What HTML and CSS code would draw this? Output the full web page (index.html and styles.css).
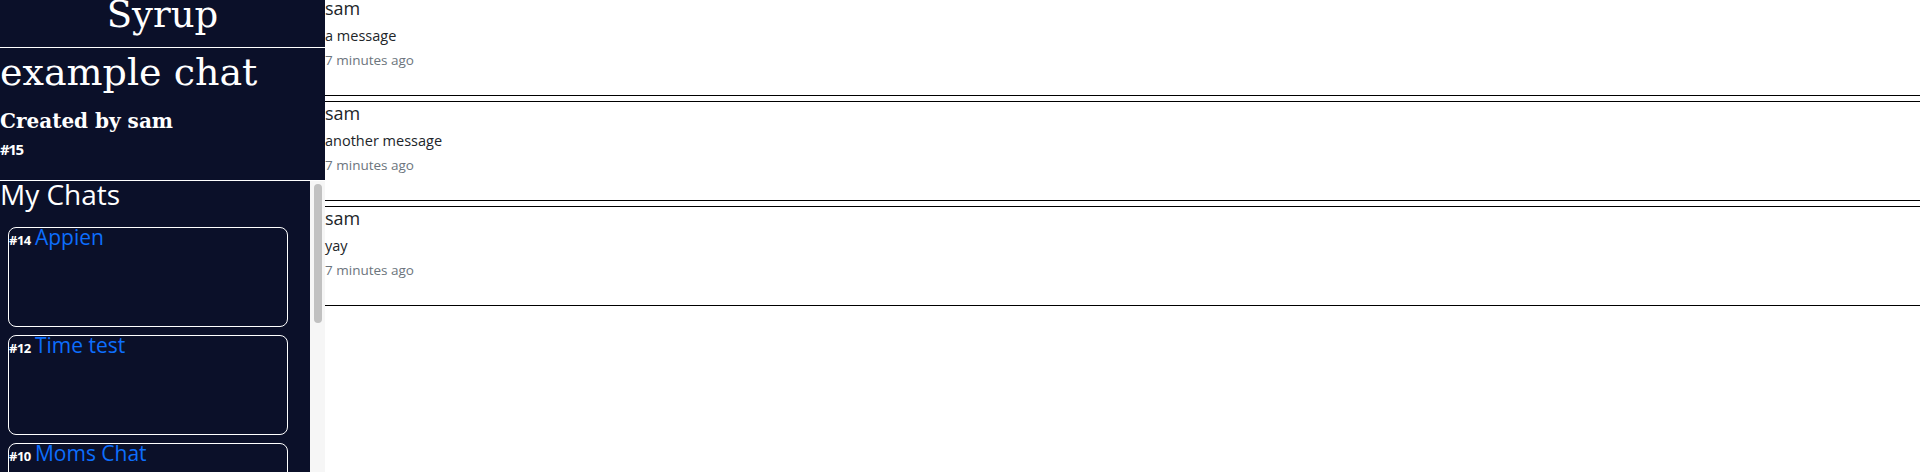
FILE: index.html
```html
<!DOCTYPE html>
<html lang="en">
<head>
<meta charset="utf-8">
<title>Syrup - example chat</title>
<link rel="stylesheet" href="styles.css">
</head>
<body>
<div class="app">
  <aside class="sidebar">
    <header class="brand">Syrup</header>
    <section class="chat-info">
      <h1 class="chat-title">example chat</h1>
      <h3 class="chat-owner">Created by sam</h3>
      <small class="chat-id">#15</small>
    </section>
    <div class="chat-pane">
      <nav class="chat-list">
        <h2 class="list-title">My Chats</h2>
        <div class="chat-card"><span class="card-id">#14</span> <a class="card-name" href="#">Appien</a></div>
        <div class="chat-card"><span class="card-id">#12</span> <a class="card-name" href="#">Time test</a></div>
        <div class="chat-card"><span class="card-id">#10</span> <a class="card-name" href="#">Moms Chat</a></div>
        <div class="chat-card"><span class="card-id">#8</span> <a class="card-name" href="#">test</a></div>
        <div class="chat-card"><span class="card-id">#5</span> <a class="card-name" href="#">hello</a></div>
      </nav>
      <div class="scrollbar"><div class="scroll-thumb"></div></div>
    </div>
  </aside>
  <main class="messages">
    <article class="msg">
      <div class="msg-author">sam</div>
      <div class="msg-body">a message</div>
      <div class="msg-time">7 minutes ago</div>
    </article>
    <article class="msg">
      <div class="msg-author">sam</div>
      <div class="msg-body">another message</div>
      <div class="msg-time">7 minutes ago</div>
    </article>
    <article class="msg">
      <div class="msg-author">sam</div>
      <div class="msg-body">yay</div>
      <div class="msg-time">7 minutes ago</div>
    </article>
  </main>
</div>
</body>
</html>
```
FILE: styles.css
```css
html, body {
  margin: 0;
  height: 100%;
  overflow: hidden;
}
body {
  font-family: "Open Sans", "Noto Sans", sans-serif;
  background: #ffffff;
  color: #212529;
}
.app {
  display: flex;
  height: 100vh;
}
.sidebar {
  width: 325px;
  flex: none;
  background: #0b1029;
  color: #ffffff;
  display: flex;
  flex-direction: column;
  min-height: 0;
}
.brand {
  flex: none;
  height: 47px;
  border-bottom: 1px solid #ffffff;
  text-align: center;
  font-family: "DejaVu Serif", serif;
  font-size: 37px;
  line-height: 30px;
}
.chat-info {
  flex: none;
  height: 130px;
  padding-top: 2px;
  border-bottom: 1px solid #ffffff;
}
.chat-title {
  margin: 0;
  font-family: "DejaVu Serif", serif;
  font-weight: normal;
  font-size: 38px;
  line-height: 44px;
}
.chat-owner {
  margin: 14px 0 0;
  font-family: "DejaVu Serif", serif;
  font-weight: bold;
  font-size: 20px;
  line-height: 26px;
}
.chat-id {
  display: block;
  margin-top: 6px;
  font-weight: 700;
  font-size: 15px;
  line-height: 18px;
  letter-spacing: -1.4px;
}
.chat-pane {
  flex: 1;
  min-height: 0;
  display: flex;
}
.chat-list {
  flex: 1;
  min-width: 0;
  overflow: hidden;
}
.scrollbar {
  flex: none;
  width: 8px;
  padding: 3px 3px 0 4px;
  background: #f6f6f6;
}
.scroll-thumb {
  height: 139px;
  background: #c1c1c1;
  border-radius: 4px;
}
.list-title {
  margin: 0 0 20px;
  font-weight: 400;
  font-size: 28px;
  line-height: 26px;
}
.chat-card {
  box-sizing: border-box;
  width: 280px;
  height: 100px;
  margin: 0 0 8px 8px;
  border: 1px solid #ffffff;
  border-radius: 8px;
  line-height: 18px;
}
.card-id {
  font-weight: 700;
  font-size: 13px;
  letter-spacing: -0.5px;
}
.card-name {
  font-size: 21px;
  color: #0d6efd;
  text-decoration: none;
}
.messages {
  flex: 1;
  min-width: 0;
}
.msg {
  height: 98px;
  border-top: 1px solid #000000;
  border-bottom: 1px solid #000000;
  margin-bottom: 5px;
}
.msg:first-child {
  margin-top: -4px;
}
.msg-author {
  margin-bottom: 7px;
  font-size: 18px;
  line-height: 22px;
}
.msg-body {
  margin-bottom: 4px;
  font-size: 14.5px;
  line-height: 20px;
}
.msg-time {
  font-size: 13.5px;
  line-height: 20px;
  color: #6c757d;
}
```
